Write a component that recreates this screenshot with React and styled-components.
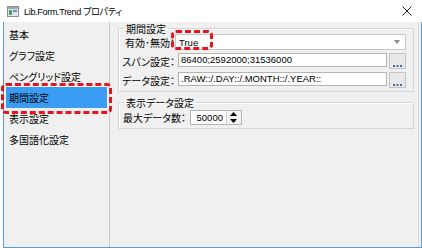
import styled, { createGlobalStyle } from "styled-components";

const GlobalStyle = createGlobalStyle`
  html, body {
    margin: 0;
    padding: 0;
    background: #ffffff;
  }
  body {
    font-family: "Noto Sans CJK JP", sans-serif;
    font-size: 10px;
    font-feature-settings: "palt";
    color: #000;
  }
`;

const latin = `"Liberation Sans", "Noto Sans CJK JP", sans-serif`;

const Window = styled.div`
  position: relative;
  width: 422px;
  height: 248px;
  display: flex;
  flex-direction: column;
  background: #ffffff;
  overflow: hidden;
`;

const TitleBar = styled.div`
  height: 22px;
  display: flex;
  align-items: center;
  padding-left: 7px;
  gap: 5px;
`;

const TitleText = styled.span`
  flex: 1;
  font-family: ${latin};
  font-size: 9px;
  letter-spacing: -0.3px;
  color: #000;
`;

const CloseButton = styled.div`
  width: 28px;
  display: flex;
  justify-content: center;
  align-items: center;
  margin-right: 1px;
`;

const Body = styled.div`
  flex: 1;
  display: flex;
  margin-left: 3px;
  border: 1px solid #5a9bd6;
  border-top: none;
  background: #f0f0f0;
  padding-right: 2px;
`;

const List = styled.ul`
  width: 101px;
  margin: 0;
  padding: 2px 2px 0 2px;
  list-style: none;
`;

const ListItem = styled.li`
  height: 21px;
  line-height: 21px;
  padding-left: 3px;
  font-size: 10px;
  background: ${(p) => (p.$selected ? "#3a9cf3" : "transparent")};
  white-space: nowrap;
`;

const Panel = styled.div`
  flex: 1;
  border-left: 1px solid #c9c9c9;
  border-right: 1px solid #d9d9d9;
  padding: 1px 4px 0 8px;
  display: flex;
  flex-direction: column;
  gap: 5px;
`;

const Group = styled.fieldset`
  margin: 0;
  padding: ${(p) => p.$top}px 7px ${(p) => p.$bottom}px 2px;
  border: 1px solid #d5d5d5;
  box-shadow: inset 1px 1px 0 #ffffff;
  min-width: 0;
`;

const Legend = styled.legend`
  padding: 0 2px;
  margin-left: 3px;
  font-size: 10px;
  line-height: 11px;
`;

const FormGrid = styled.div`
  display: grid;
  grid-template-columns: 54px 1fr;
  row-gap: 3px;
  align-items: center;
`;

const Label = styled.label`
  font-size: 10px;
  text-align: right;
  white-space: nowrap;
`;

const Combo = styled.div`
  height: 14px;
  border: 1px solid #c8c8c8;
  background: #ffffff;
  display: flex;
  align-items: center;
  padding-left: 3px;
`;

const ComboText = styled.span`
  flex: 1;
  font-family: ${latin};
  font-size: 9.5px;
`;

const FieldRow = styled.div`
  display: flex;
  margin-left: 3px;
`;

const TextBox = styled.div`
  flex: 1;
  height: 12px;
  line-height: 12px;
  border: 1px solid #b4b4b4;
  background: #ffffff;
  padding: 0 2px;
  font-family: ${latin};
  font-size: 9.5px;
  white-space: nowrap;
  overflow: hidden;
`;

const DotsButton = styled.div`
  width: 15px;
  height: 13px;
  margin-left: 2px;
  border: 1px solid #c4c4c4;
  background: #e8e8e8;
  display: flex;
  align-items: flex-end;
  justify-content: center;
  padding-bottom: 1px;
`;

const SpinRow = styled.div`
  display: flex;
  align-items: center;
  gap: 4px;
  padding-left: 2px;
`;

const SpinLabel = styled.span`
  font-size: 10px;
  line-height: 13px;
  white-space: nowrap;
`;

const SpinBox = styled.div`
  display: flex;
  height: 13px;
  border: 1px solid #b4b4b4;
  background: #ffffff;
`;

const SpinValue = styled.span`
  width: 32px;
  text-align: right;
  padding-right: 3px;
  line-height: 13px;
  font-family: ${latin};
  font-size: 9.5px;
`;

const SpinButtons = styled.div`
  width: 14px;
  display: flex;
  flex-direction: column;
  border-left: 1px solid #d0d0d0;
  background: #f4f4f4;
`;

const SpinHalf = styled.div`
  flex: 1;
  display: flex;
  align-items: center;
  justify-content: center;
`;

const Highlight = styled.div`
  position: absolute;
  left: ${(p) => p.$x}px;
  top: ${(p) => p.$y}px;
  width: ${(p) => p.$w}px;
  height: ${(p) => p.$h}px;
  border: 3px dashed #e8141c;
  border-radius: 5px;
  box-sizing: border-box;
  pointer-events: none;
`;

const WindowIcon = () => (
  <svg width="12" height="11" viewBox="0 0 12 11">
    <rect x="0.5" y="0.5" width="11" height="10" fill="#e6e6e6" stroke="#8c8c8c" />
    <rect x="1" y="1" width="10" height="2" fill="#9aa7b5" />
    <rect x="2" y="4" width="3" height="5" fill="#4aa36a" />
    <rect x="6" y="4" width="4" height="2" fill="#5d8fd0" />
  </svg>
);

const Dots = () => (
  <svg width="9" height="3" viewBox="0 0 9 3">
    <rect x="0" y="1" width="2" height="2" fill="#3f6f9f" />
    <rect x="3.5" y="1" width="2" height="2" fill="#3f6f9f" />
    <rect x="7" y="1" width="2" height="2" fill="#3f6f9f" />
  </svg>
);

const items = ["基本", "グラフ設定", "ペングリッド設定", "期間設定", "表示設定", "多国語化設定"];

export default function App() {
  return (
    <>
      <GlobalStyle />
      <Window>
        <TitleBar>
          <WindowIcon />
          <TitleText>Lib.Form.Trend プロパティ</TitleText>
          <CloseButton>
            <svg width="10" height="10" viewBox="0 0 10 10">
              <path d="M0.5 0.5 L9.5 9.5 M9.5 0.5 L0.5 9.5" stroke="#222" strokeWidth="1" />
            </svg>
          </CloseButton>
        </TitleBar>
        <Body>
          <List>
            {items.map((item) => (
              <ListItem key={item} $selected={item === "期間設定"}>
                {item}
              </ListItem>
            ))}
          </List>
          <Panel>
            <Group $top={0} $bottom={3}>
              <Legend>期間設定</Legend>
              <FormGrid>
                <Label>有効･無効：</Label>
                <Combo>
                  <ComboText>True</ComboText>
                  <svg width="14" height="8" viewBox="0 0 14 8">
                    <path d="M3 2 L9 2 L6 6 Z" fill="#8a8a8a" />
                  </svg>
                </Combo>
                <Label>スパン設定：</Label>
                <FieldRow>
                  <TextBox>86400;2592000;31536000</TextBox>
                  <DotsButton>
                    <Dots />
                  </DotsButton>
                </FieldRow>
                <Label>データ設定：</Label>
                <FieldRow>
                  <TextBox>.RAW::/.DAY::/.MONTH::/.YEAR::</TextBox>
                  <DotsButton>
                    <Dots />
                  </DotsButton>
                </FieldRow>
              </FormGrid>
            </Group>
            <Group $top={2} $bottom={3}>
              <Legend>表示データ設定</Legend>
              <SpinRow>
                <SpinLabel>最大データ数：</SpinLabel>
                <SpinBox>
                  <SpinValue>50000</SpinValue>
                  <SpinButtons>
                    <SpinHalf>
                      <svg width="7" height="4" viewBox="0 0 7 4">
                        <path d="M0 4 L3.5 0 L7 4 Z" fill="#000" />
                      </svg>
                    </SpinHalf>
                    <SpinHalf>
                      <svg width="7" height="4" viewBox="0 0 7 4">
                        <path d="M0 0 L7 0 L3.5 4 Z" fill="#000" />
                      </svg>
                    </SpinHalf>
                  </SpinButtons>
                </SpinBox>
              </SpinRow>
            </Group>
          </Panel>
        </Body>
        <Highlight $x={1} $y={83} $w={111} $h={31} />
        <Highlight $x={171} $y={30} $w={42} $h={20} />
      </Window>
    </>
  );
}
